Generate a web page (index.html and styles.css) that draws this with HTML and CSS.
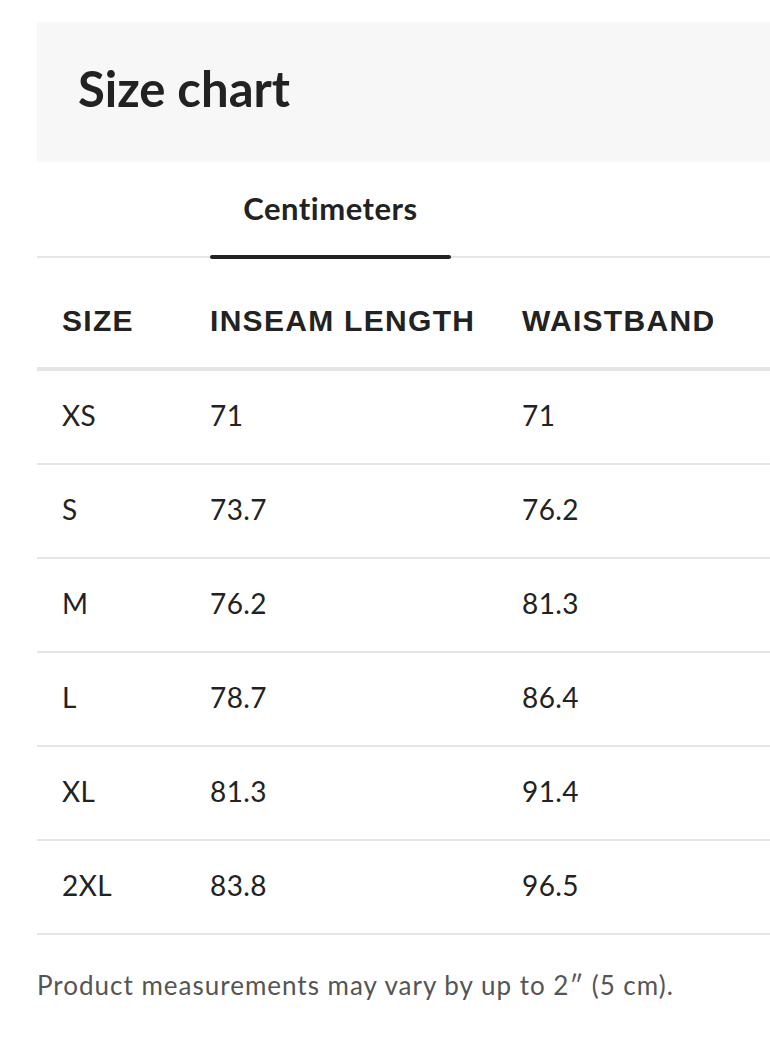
FILE: index.html
```html
<!DOCTYPE html>
<html>
<head>
<meta charset="utf-8">
<link rel="stylesheet" href="styles.css">
</head>
<body>
<div class="page">
  <div class="title-box"><h1 class="title">Size chart</h1></div>
  <div class="tabs">
    <div class="tab active">Centimeters</div>
  </div>
  <div class="table">
    <div class="row head"><div>SIZE</div><div>INSEAM LENGTH</div><div>WAISTBAND</div></div>
    <div class="row"><div>XS</div><div>71</div><div>71</div></div>
    <div class="row"><div>S</div><div>73.7</div><div>76.2</div></div>
    <div class="row"><div>M</div><div>76.2</div><div>81.3</div></div>
    <div class="row"><div>L</div><div>78.7</div><div>86.4</div></div>
    <div class="row"><div>XL</div><div>81.3</div><div>91.4</div></div>
    <div class="row"><div>2XL</div><div>83.8</div><div>96.5</div></div>
  </div>
  <p class="note">Product measurements may vary by up to 2″ (5 cm).</p>
</div>
</body>
</html>
```
FILE: styles.css
```css
html, body { margin: 0; padding: 0; background: #fff; }
body { font-family: Lato, "Open Sans", sans-serif; color: #222; }
.page { padding: 22px 0 0 37px; }
.title-box {
  background: #f7f7f7;
  height: 140px;
  padding: 0 0 8px 41px;
  display: flex;
  align-items: center;
  box-sizing: border-box;
}
.title { margin: 0; font-size: 49px; font-weight: 700; color: #222; }
.tabs {
  height: 96px;
  border-bottom: 2px solid #e5e5e5;
  box-sizing: border-box;
  padding-left: 173px;
  display: flex;
}
.tab {
  width: 241px;
  display: flex;
  align-items: center;
  justify-content: center;
  font-size: 31px;
  font-weight: 700;
  letter-spacing: 0.5px;
  position: relative;
  padding-bottom: 3px;
  box-sizing: border-box;
}
.tab.active::after {
  content: "";
  position: absolute;
  left: 0; right: 0; bottom: -3px;
  height: 4px;
  border-radius: 2px;
  background: #222;
}
.row {
  display: grid;
  grid-template-columns: 148px 312px 1fr;
  padding: 0 0 5px 25px;
  height: 94px;
  align-items: center;
  border-bottom: 2px solid #e5e5e5;
  font-size: 28px;
  letter-spacing: 0.4px;
  box-sizing: border-box;
}
.row.head {
  height: 113px;
  border-bottom: 4px solid #e5e5e5;
  font-family: "Liberation Sans", Arial, sans-serif;
  font-weight: 700;
  font-size: 30px;
  letter-spacing: 1.3px;
  padding: 16px 0 0 25px;
}
.note {
  margin: 34px 0 0;
  font-size: 26px;
  letter-spacing: 1px;
  color: #555;
}
```
